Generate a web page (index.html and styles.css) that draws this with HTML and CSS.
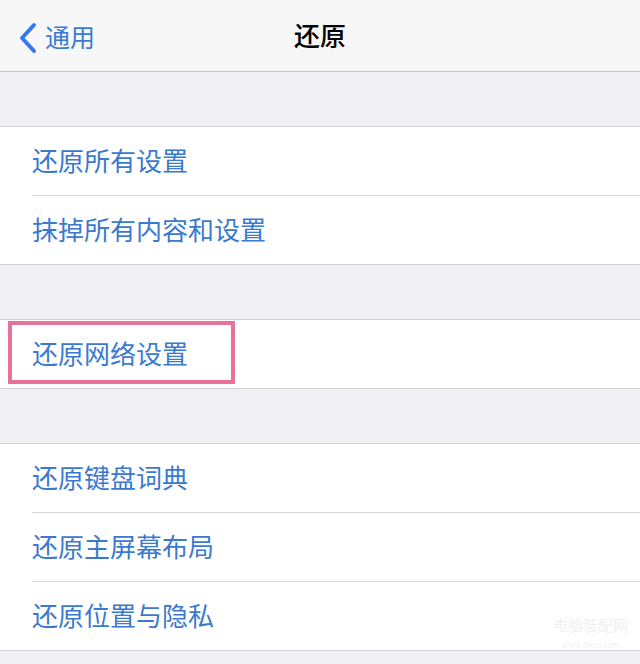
FILE: index.html
```html
<!DOCTYPE html>
<html lang="zh-CN">
<head>
    <meta charset="UTF-8">
    <meta name="viewport" content="width=device-width, initial-scale=1.0">
    <title>还原</title>
    <link rel="stylesheet" href="styles.css">
</head>
<body>
    <!-- Навбар -->
    <div class="navbar">
        <div class="back">
            <svg class="chevron" width="22" height="32" viewBox="0 0 22 32">
                <path d="M17 3 L5 16 L17 29" fill="none" stroke="#3478f0" stroke-width="4" stroke-linecap="round" stroke-linejoin="round"/>
            </svg>
            <span>通用</span>
        </div>
        <div class="title">还原</div>
    </div>

    <div class="group">
        <div class="row">还原所有设置</div>
        <div class="row">抹掉所有内容和设置</div>
    </div>

    <div class="group">
        <div class="row marked">
            还原网络设置
            <div class="highlight"></div>
        </div>
    </div>

    <div class="group">
        <div class="row">还原键盘词典</div>
        <div class="row">还原主屏幕布局</div>
        <div class="row">还原位置与隐私</div>
    </div>

    <div class="watermark">电脑装配网<br><small>www.dnzp.com</small></div>
</body>
</html>
```

FILE: styles.css
```css
body {
    font-family: "Noto Sans CJK SC", "Noto Sans", sans-serif;
    background-color: #efeff4;
    margin: 0;
    padding: 0;
    width: 640px;
    height: 664px;
    overflow: hidden;
    position: relative;
}

.navbar {
    height: 71px;
    background-color: #f7f7f8;
    border-bottom: 1px solid #c8c8cc;
    display: flex;
    align-items: center;
    justify-content: center;
    position: relative;
}

.back {
    position: absolute;
    left: 17px;
    top: 22px;
    display: flex;
    align-items: center;
    color: #3a7bd5;
    font-size: 25px;
    gap: 6px;
}

.back span {
    margin-top: -5px;
}

.title {
    font-size: 26px;
    font-weight: 500;
    color: #000;
    margin-bottom: 2px;
}

/* Группы */
.group {
    margin-top: 54px;
    background-color: #fff;
    border-top: 1px solid #d3d3d7;
    border-bottom: 1px solid #d3d3d7;
    padding-left: 32px;
}

.row {
    height: 68px;
    display: flex;
    align-items: center;
    font-size: 26px;
    color: #3b79cf;
    border-bottom: 1px solid #d6d6da;
    position: relative;
    padding-bottom: 4px;
    box-sizing: border-box;
    height: 69px;
}

.row:last-child {
    border-bottom: none;
    height: 68px;
}

.highlight {
    position: absolute;
    left: -24px;
    top: 1px;
    width: 219px;
    height: 55px;
    border: 4px solid #e8719a;
}

.watermark {
    position: absolute;
    right: 12px;
    bottom: 14px;
    color: rgba(200, 200, 205, 0.3);
    font-size: 15px;
    text-align: center;
    line-height: 1.1;
}

.watermark small {
    font-size: 8px;
}
```
